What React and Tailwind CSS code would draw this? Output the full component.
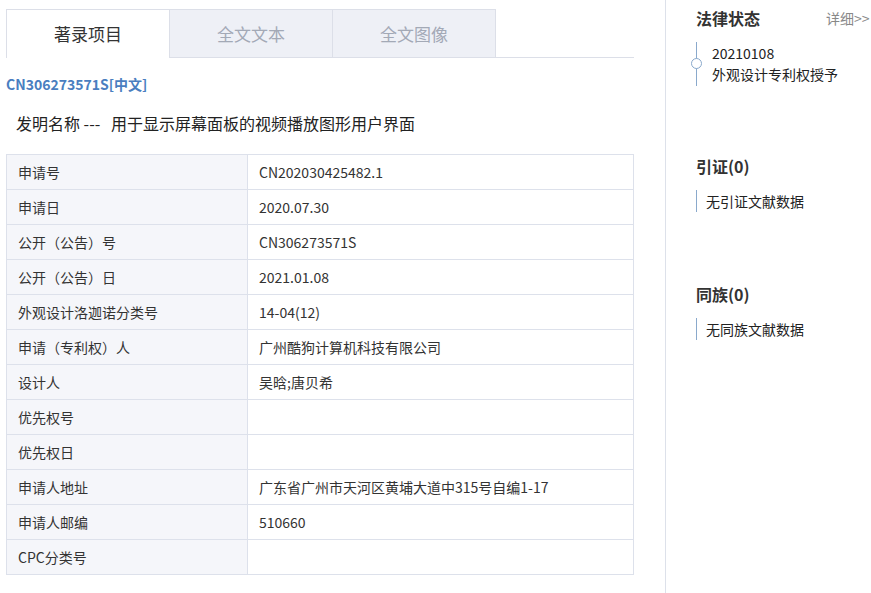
const font = { fontFamily: '"Noto Sans CJK SC", "Liberation Sans", sans-serif' }

const rows = [
    ['申请号', 'CN202030425482.1'],
    ['申请日', '2020.07.30'],
    ['公开（公告）号', 'CN306273571S'],
    ['公开（公告）日', '2021.01.08'],
    ['外观设计洛迦诺分类号', '14-04(12)'],
    ['申请（专利权）人', '广州酷狗计算机科技有限公司'],
    ['设计人', '吴晗;唐贝希'],
    ['优先权号', ''],
    ['优先权日', ''],
    ['申请人地址', '广东省广州市天河区黄埔大道中315号自编1-17'],
    ['申请人邮编', '510660'],
    ['CPC分类号', ''],
]

function Tabs() {
    return (
        <div className="flex h-[49px]">
            <div className="w-[164px] flex items-center justify-center border border-b-0 border-[#dcdfe8] bg-white text-[17px] text-[#333]">
                著录项目
            </div>
            <div className="w-[163px] flex items-center justify-center border-t border-r border-b border-[#dcdfe8] bg-[#eef0f6] text-[17px] text-[#a3a9b6]">
                全文文本
            </div>
            <div className="w-[163px] flex items-center justify-center border-t border-r border-b border-[#dcdfe8] bg-[#eef0f6] text-[17px] text-[#a3a9b6]">
                全文图像
            </div>
            <div className="flex-1 border-b border-[#dcdfe8]" />
        </div>
    )
}

function InfoTable() {
    return (
        <table className="w-full border-collapse text-[14px] text-[#333]">
            <tbody>
                {rows.map(([k, v]) => (
                    <tr key={k} className="h-[35px]">
                        <td className="w-[241px] border border-[#dde1eb] bg-[#f5f6fa] pl-[11px]">{k}</td>
                        <td className="border border-[#dde1eb] pl-[11px]">{v}</td>
                    </tr>
                ))}
            </tbody>
        </table>
    )
}

export default function App() {
    return (
        <div className="flex h-screen w-[871px] overflow-hidden bg-white" style={font}>
            {/* Left: main record */}
            <div className="w-[665px] flex-shrink-0 pl-[6px] pr-[31px] pt-[9px]">
                <Tabs />
                <div className="mt-[16px] text-[14px] font-bold leading-[20px] text-[#4a7ec0]">
                    CN306273571S[中文]
                </div>
                <div className="mt-[18px] pl-[10px] text-[16px] leading-[22px] text-[#222]">
                    发明名称 ---&nbsp;&nbsp; 用于显示屏幕面板的视频播放图形用户界面
                </div>
                <div className="mt-[20px]">
                    <InfoTable />
                </div>
            </div>

            {/* Right: side info */}
            <div className="flex-1 min-w-0 border-l border-[#dde1ea] pl-[30px] pt-[6px]">
                <div className="flex items-center whitespace-nowrap">
                    <span className="text-[16px] font-bold text-[#333]">法律状态</span>
                    <span className="ml-[66px] text-[14px] text-[#888]">详细&gt;&gt;</span>
                </div>
                <div className="relative mt-[12px] border-l-[1.5px] border-[#8aa9cc] pl-[15px] py-[1px]">
                    <div className="absolute left-[-6px] top-[16px] h-[11px] w-[11px] rounded-full border border-[#8aa9cc] bg-white" />
                    <div className="text-[14px] leading-[20px] text-[#222]">20210108</div>
                    <div className="text-[14px] leading-[22px] text-[#222]">外观设计专利权授予</div>
                </div>

                <div className="mt-[68px] text-[16px] font-bold leading-[24px] text-[#333]">引证(0)</div>
                <div className="mt-[12px] border-l-[1.5px] border-[#8aa9cc] pl-[9px] text-[14px] leading-[22px] text-[#222]">
                    无引证文献数据
                </div>

                <div className="mt-[70px] text-[16px] font-bold leading-[24px] text-[#333]">同族(0)</div>
                <div className="mt-[12px] border-l-[1.5px] border-[#8aa9cc] pl-[9px] text-[14px] leading-[22px] text-[#222]">
                    无同族文献数据
                </div>
            </div>
        </div>
    )
}
